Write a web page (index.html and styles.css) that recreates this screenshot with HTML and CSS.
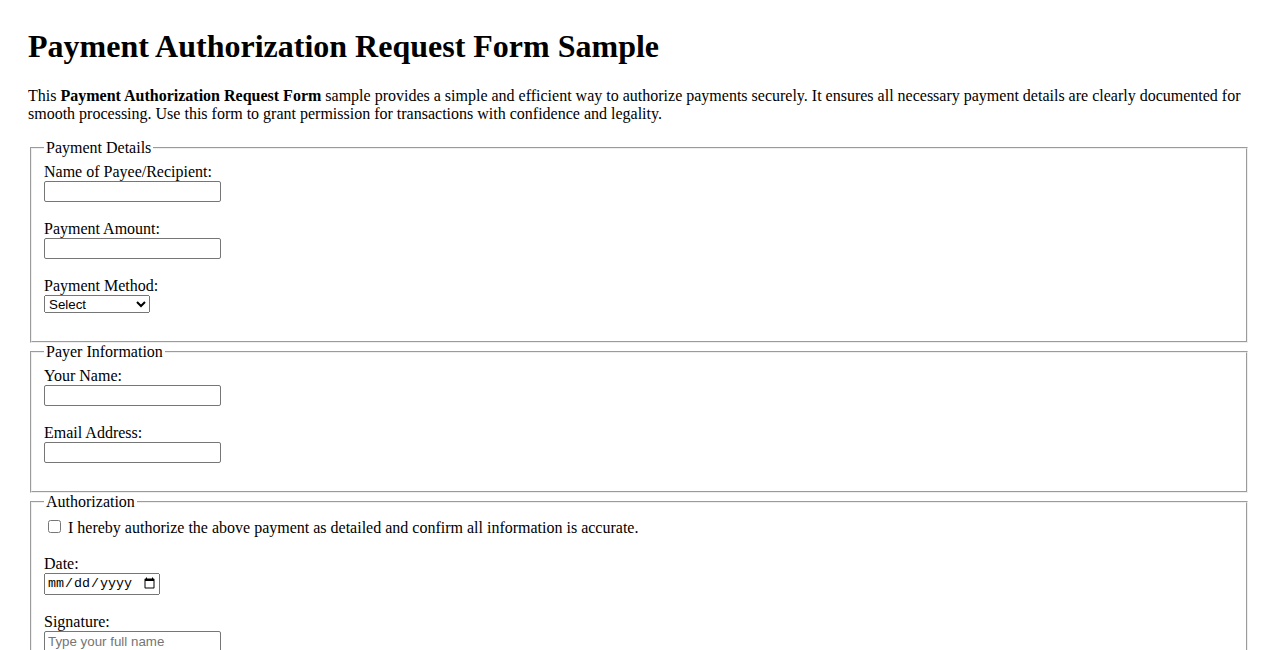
FILE: index.html
```html
<!DOCTYPE html>
<html>
<head>
    <title>Payment Authorization Request Form Sample</title>
    <link rel="stylesheet" href="styles.css">
</head>
<body>
    <h1>Payment Authorization Request Form Sample</h1>
    <p>This <strong>Payment Authorization Request Form</strong> sample provides a simple and efficient way to authorize payments securely. It ensures all necessary payment details are clearly documented for smooth processing. Use this form to grant permission for transactions with confidence and legality.</p>

    <form>
        <!-- Payment details -->
        <fieldset>
            <legend>Payment Details</legend>
            <label for="payee">Name of Payee/Recipient:</label><br>
            <input type="text" id="payee" name="payee"><br><br>

            <label for="amount">Payment Amount:</label><br>
            <input type="text" id="amount" name="amount"><br><br>

            <label for="method">Payment Method:</label><br>
            <select id="method" name="method">
                <option value="">Select</option>
                <option value="bank">Bank Transfer</option>
                <option value="card">Credit Card</option>
                <option value="check">Check</option>
            </select><br><br>
        </fieldset>

        <!-- Payer info -->
        <fieldset class="payer">
            <legend>Payer Information</legend>
            <label for="name">Your Name:</label><br>
            <input type="text" id="name" name="name"><br><br>

            <label for="email">Email Address:</label><br>
            <input type="email" id="email" name="email"><br><br>
        </fieldset>

        <!-- Authorization -->
        <fieldset>
            <legend>Authorization</legend>
            <input type="checkbox" id="agree" name="agree">
            <label for="agree">I hereby authorize the above payment as detailed and confirm all information is accurate.</label><br><br>

            <label for="date">Date:</label><br>
            <input type="date" id="date" name="date"><br><br>

            <label for="signature">Signature:</label><br>
            <input type="text" id="signature" name="signature" placeholder="Type your full name"><br><br>
        </fieldset>

        <br>
        <button type="submit">Submit Authorization</button>
    </form>
</body>
</html>
```

FILE: styles.css
```css
/* Plain document look */
body {
    font-family: "Liberation Serif", "Times New Roman", serif;
    font-size: 16px;
    margin: 28px;
    color: #000;
    background: #fff;
}

h1 {
    font-size: 32px;
    margin: 0 0 22px;
}

p {
    margin: 16px 0;
}

fieldset.payer {
    padding-top: 6.6px;
    padding-bottom: 10px;
}

/* Form controls */
input,
select,
button {
    font-family: "Liberation Sans", Arial, sans-serif;
    font-size: 13.333px;
}

input[type="text"],
input[type="email"] {
    box-sizing: border-box;
    width: 177px;
    height: 21px;
    padding: 1px 3px;
    border: 1px solid #767676;
    border-radius: 2px;
}

input[type="date"] {
    font-family: "Liberation Mono", "Courier New", monospace;
    box-sizing: border-box;
    width: 116px;
    height: 22px;
}

select {
    width: 106px;
    height: 18px;
}

::placeholder {
    color: #757575;
}
```
